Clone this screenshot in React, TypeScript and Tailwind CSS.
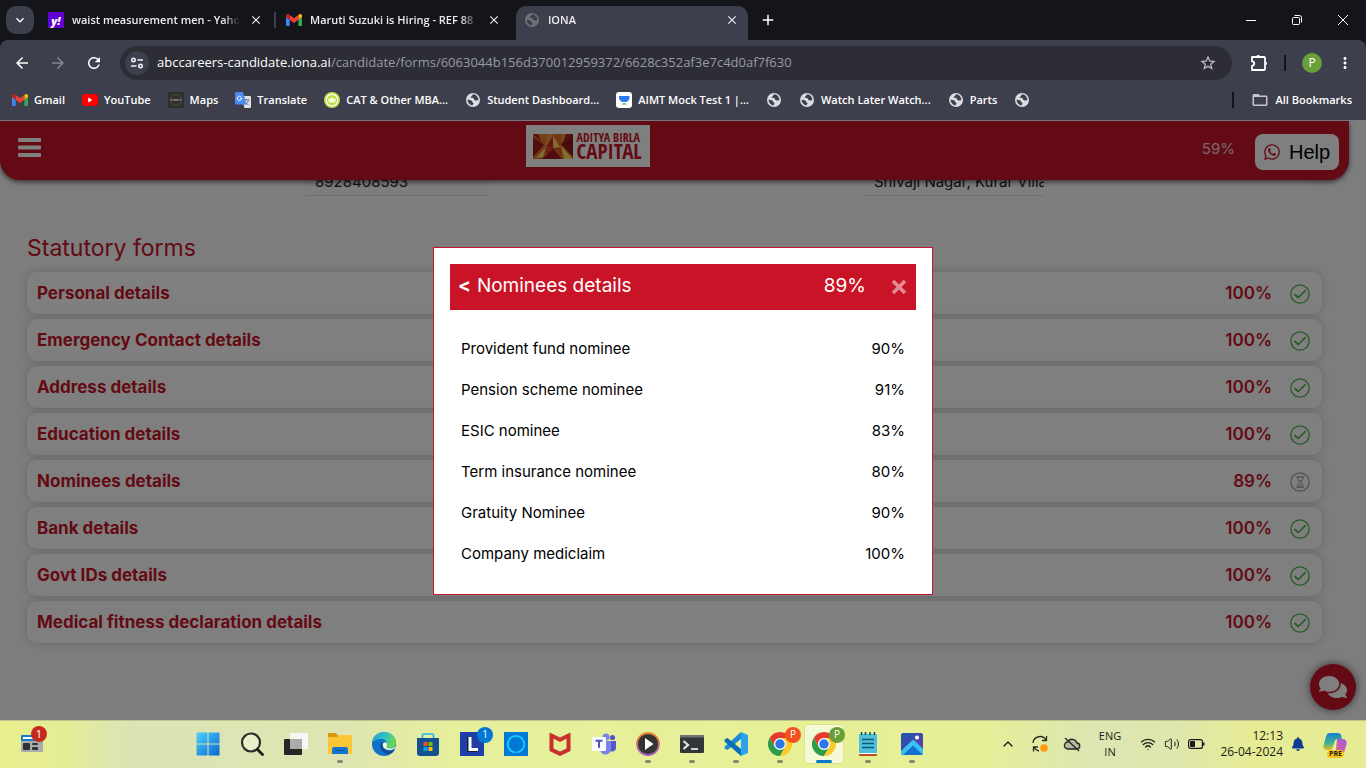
import type { ReactNode } from "react";
import {
  MdArrowBack,
  MdArrowForward,
  MdRefresh,
  MdStarBorder,
  MdMoreVert,
  MdFolderOpen,
  MdClose,
  MdAdd,
  MdKeyboardArrowDown,
} from "react-icons/md";
import { FaComments, FaWhatsapp, FaBell } from "react-icons/fa";
import { ChevronUp, Wifi, Volume2 } from "lucide-react";

/* ---------- small drawings ---------- */

function GmailIcon() {
  return (
    <svg viewBox="52 42 88 66" className="h-3 w-4 shrink-0">
      <path fill="#4285f4" d="M58 108h14V74L52 59v43c0 3.32 2.69 6 6 6" />
      <path fill="#34a853" d="M120 108h14c3.32 0 6-2.69 6-6V59l-20 15" />
      <path fill="#fbbc04" d="M120 48v26l20-15v-8c0-7.42-8.47-11.65-14.4-7.2" />
      <path fill="#ea4335" d="M72 74V48l24 18 24-18v26L96 92" />
      <path fill="#c5221f" d="M52 51v8l20 15V48l-5.6-4.2c-5.94-4.45-14.4-.22-14.4 7.2" />
    </svg>
  );
}

function YahooIcon() {
  return (
    <span className="flex size-4 shrink-0 items-center justify-center bg-[#6001d2] text-[11px] leading-none font-extrabold text-white italic">
      y!
    </span>
  );
}

function YouTubeIcon() {
  return (
    <svg viewBox="0 0 16 12" className="h-3 w-4 shrink-0">
      <rect width="16" height="12" rx="3" fill="#f00" />
      <path d="M6.2 3.6v4.8l4.2-2.4z" fill="#fff" />
    </svg>
  );
}

function MapsIcon() {
  return (
    <svg viewBox="0 0 16 16" className="size-4 shrink-0">
      <rect width="16" height="16" fill="#302d2d" />
      <circle cx="8" cy="8" r="5.5" fill="none" stroke="#55504e" />
      <path d="M2 8h3l1-1 1 2 1-2 1 2 1-2 1 1h3" fill="none" stroke="#8d8580" />
    </svg>
  );
}

function TranslateIcon() {
  return (
    <svg viewBox="0 0 16 16" className="size-4 shrink-0">
      <path d="M6 4h9a1 1 0 0 1 1 1v10a1 1 0 0 1-1 1H9.500z" fill="#dfe1e5" />
      <path d="M8.500 8h6M11.500 6.800v1.200M13.500 8c-.6 2-2 3.500-3.500 4.500M9.800 9.500c.8 1.500 2 2.500 3.700 3.200" stroke="#5f6f86" strokeWidth=".9" fill="none" />
      <path d="M1 0h7l3.600 12.500H1a1 1 0 0 1-1-1V1a1 1 0 0 1 1-1z" fill="#4a8af4" />
      <path d="M6.300 5.100A2.200 2.200 0 1 0 6.700 6.500H4.700" fill="none" stroke="#fff" strokeWidth="1" />
    </svg>
  );
}

function CatIcon() {
  return (
    <svg viewBox="0 0 16 16" className="size-4 shrink-0">
      <circle cx="8" cy="8" r="8" fill="#bfe04a" />
      <circle cx="8" cy="8" r="5.800" fill="none" stroke="#fff" strokeWidth="1.200" />
      <path d="M4 7.500 8 5.500l4 2-1 3H5z" fill="#f4fbd8" />
    </svg>
  );
}

function AimtIcon() {
  return (
    <svg viewBox="0 0 16 16" className="size-4 shrink-0">
      <rect width="16" height="16" rx="3" fill="#fff" />
      <path d="M3 4h10.500v1.500A4.500 4.500 0 0 1 9 10H7.500A4.500 4.500 0 0 1 3 5.500z" fill="#2b7bf0" />
      <path d="M5.500 12.500a3 2 0 0 1 5.500 0z" fill="#1cb57a" />
    </svg>
  );
}

function Globe({ dim = false }: { dim?: boolean }) {
  return (
    <svg viewBox="0 0 16 16" className={dim ? "size-4 shrink-0 text-[#6f7177]" : "size-4 shrink-0 text-[#dcdde0]"}>
      <circle cx="8" cy="8" r="7" fill="currentColor" />
      <path
        d="M8.300 2.300c-.9.300-1.300 1-1 1.700-.9.200-1.600.700-1.700 1.500.9.600 2.200.300 3 .900.700.600.500 1.500 1.300 1.900 1 .400 1.900-.300 3.400-.1a5.500 5.500 0 0 0-5-5.900zM2.600 7.800c1.300-.100 2.700 0 3.700.600.900.600.600 1.500 1.400 2 .500.300.900.500.800 1.100-.100.700-.900.800-.900 1.900-2.800-.200-5-2.600-5-5.600z"
        fill="#3e3f4c"
      />
    </svg>
  );
}

function PuzzleIcon() {
  return (
    <svg viewBox="0 0 18 18" className="size-[18px]" fill="none" stroke="#fff" strokeWidth="1.800" strokeLinejoin="round">
      <path d="M2 3h12a1 1 0 0 1 1 1v11a1 1 0 0 1-1 1H2v-4.200a2.200 2.200 0 0 0 0-4.400z" />
      <path d="M6.300 2.500a1.900 1.900 0 0 1 3.700 0zM15.500 7.600a1.900 1.900 0 0 1 0 3.700z" fill="#fff" stroke="none" />
    </svg>
  );
}

function SiteInfoIcon() {
  return (
    <svg viewBox="0 0 14 12" className="h-3 w-3.5" fill="none" stroke="#f0f0f3" strokeWidth="1.600">
      <circle cx="3.500" cy="3" r="1.700" />
      <path d="M7.500 3H13M1 9h5.500" />
      <circle cx="10.500" cy="9" r="1.700" />
    </svg>
  );
}

function CheckIcon() {
  return (
    <svg viewBox="0 0 20 20" className="size-5" fill="none" stroke="#53b653" strokeLinecap="round" strokeLinejoin="round">
      <circle cx="10" cy="10" r="9.200" strokeWidth="1.300" />
      <path d="M5 10.500 8.300 13.500 15.200 6.600" strokeWidth="1.700" />
    </svg>
  );
}

function PendingIcon() {
  return (
    <svg viewBox="0 0 20 20" className="size-5" fill="none" stroke="#a3a3a3">
      <circle cx="10" cy="10" r="9.200" strokeWidth="1.300" />
      <path d="M6.500 5h7.500M6.500 15.300h7.500" strokeWidth="1.300" />
      <path d="M7.500 5.500c0 2.700 1.200 3.500 2.200 4.600-1 1.100-2.200 2-2.200 4.700M13 5.500c0 2.700-1.200 3.500-2.200 4.600 1 1.100 2.200 2 2.200 4.700" />
      <path d="M8.300 14.500 10.250 12l1.950 2.500zM8.700 8h3.100l-1.550 1.700z" fill="#a3a3a3" stroke="none" />
    </svg>
  );
}

function MosaicLogo() {
  return (
    <svg viewBox="0 0 40 25" className="h-[25px] w-10 shrink-0">
      <rect width="40" height="25" fill="#e8702c" />
      <path d="M0 0h6l3 9z" fill="#b3261e" />
      <path d="M0 3v20l11-12z" fill="#a01c1a" />
      <path d="M5 0h8L9 9z" fill="#e8832f" />
      <path d="M13 0h7v12L12 14z" fill="#f09a38" />
      <path d="M13 13 20 2v12z" fill="#d3262d" />
      <path d="M20 2v12l7-1z" fill="#f5dc5a" />
      <path d="M20 0h8l-2 11z" fill="#e5702c" />
      <path d="M28 0h6l-5 9z" fill="#f0903a" />
      <path d="M40 2v21L28 10z" fill="#8d1618" />
      <path d="M33 0h7v3l-10 6z" fill="#a21c1e" />
      <path d="M3 24 13 13l-3 10z" fill="#f6e262" />
      <path d="M9 25l11-11 9 11z" fill="#a01a1c" />
      <path d="M12 14h8l-7 8z" fill="#d8442a" />
      <path d="M20 14h8l2 8z" fill="#e0522c" />
      <path d="M28 12l12 13h-9z" fill="#f6e262" />
    </svg>
  );
}

function ChromeIcon() {
  return (
    <svg viewBox="0 0 48 48" className="size-6">
      <circle cx="24" cy="24" r="12" fill="#fff" />
      <path fill="#e33b2e" d="M24 12h20.780a23.994 23.994 0 0 0-41.564.003L13.608 30A11.985 11.985 0 0 1 24 12z" />
      <path fill="#2a9c4a" d="M13.609 30.003 3.218 12.006A23.994 23.994 0 0 0 24.003 48l10.390-17.997a11.985 11.985 0 0 1-20.784 0z" />
      <path fill="#fcc92e" d="M34.391 30.003 24 48a23.994 23.994 0 0 0 20.780-35.998H24a11.985 11.985 0 0 1 10.391 18z" />
      <circle cx="24" cy="24" r="9.500" fill="#2b76e8" />
    </svg>
  );
}

function WidgetsIcon() {
  return (
    <svg viewBox="0 0 22 17" className="h-[17px] w-[22px]">
      <rect width="22" height="17" rx="1" fill="#a9abad" />
      <rect width="22" height="6" rx="1" fill="#1380c4" />
      <rect x="2" y="2" width="11" height="2" fill="#fff" />
      <rect x="2" y="8" width="7" height="7" rx="1" fill="#303234" />
      <rect x="11" y="8" width="6" height="2" rx="1" fill="#303234" />
      <rect x="11" y="12" width="6" height="3" rx="1" fill="#303234" />
    </svg>
  );
}

function StartIcon() {
  return (
    <svg viewBox="0 0 24 24" className="size-6">
      <defs>
        <linearGradient id="start" x1="0" y1="0" x2="1" y2="1">
          <stop offset="0" stopColor="#50d0fb" />
          <stop offset="1" stopColor="#0668cf" />
        </linearGradient>
      </defs>
      <path d="M1 .5h10.500v11H.500V1zM12.500.5h11v11h-11zM.500 12.500h11v11H.500zM12.500 12.500h11v11h-11z" fill="url(#start)" />
    </svg>
  );
}

function SearchIcon() {
  return (
    <svg viewBox="0 0 24 24" className="size-6">
      <circle cx="11" cy="10.500" r="9" fill="#f3f5dc" fillOpacity=".6" stroke="#2c2c2c" strokeWidth="2.200" />
      <path d="m17.500 17.500 5 5" stroke="#1c1c1c" strokeWidth="2.800" strokeLinecap="round" />
    </svg>
  );
}

function TaskViewIcon() {
  return (
    <svg viewBox="0 0 24 24" className="size-6">
      <rect x="0" y="7" width="18" height="16" rx="1" fill="#262626" />
      <rect x="6" y="1" width="18" height="16" rx="1" fill="#f7f7f7" />
      <rect x="6" y="7" width="12" height="10" fill="#ababab" />
    </svg>
  );
}

function ExplorerIcon() {
  return (
    <svg viewBox="0 0 24 24" className="size-6">
      <path d="M0 2a1 1 0 0 1 1-1h7l2 2.500v4H0z" fill="#d99a06" />
      <path d="M0 5h9l2-2h12a1 1 0 0 1 1 1v18H0z" fill="#fdc636" />
      <path d="M4 22v-5a2 2 0 0 1 2-2h12a2 2 0 0 1 2 2v5z" fill="#1276cc" />
      <path d="M7 18.500h10" stroke="#0b559c" />
    </svg>
  );
}

function EdgeIcon() {
  return (
    <svg viewBox="0 0 24 24" className="size-6">
      <defs>
        <linearGradient id="edgeTop" x1="0" y1="0" x2="1" y2=".4">
          <stop offset="0" stopColor="#1d9fdc" />
          <stop offset=".6" stopColor="#35c5c0" />
          <stop offset="1" stopColor="#66d84d" />
        </linearGradient>
      </defs>
      <circle cx="12" cy="12" r="12" fill="#1170c8" />
      <path d="M0 11C1 4 6 0 12 0c7 0 12 5 12 10 0 4-3 6.500-6.500 6.500-2.500 0-4-1-3.500-2 1-1 1-2 1-3C15 9 12.500 7 9 7 5 7 1.500 8.500 0 11z" fill="url(#edgeTop)" />
      <path d="M8.500 12c-1 5 3 10 8 10 2 0 4.500-1.500 6-4-6 3-12.500 0-12-5 0-1.500 1-2.500 1.500-3-2 0-3.200 1-3.500 2z" fill="#0f4a93" />
      <path d="M11.200 11c-1.500 3 1 7 6 7 2 0 4-.6 5.500-1.500l1.200-3c-1.500 2-3.500 3-6 3-2.500 0-4-1-3.500-2 1-1 .800-2.500.300-3.500-.800-1.200-2.600-1-3.500 0z" fill="#eef7df" />
    </svg>
  );
}

function StoreIcon() {
  return (
    <svg viewBox="0 0 24 24" className="size-6">
      <path d="M6.500 7V3a1 1 0 0 1 1-1h9a1 1 0 0 1 1 1v4" fill="none" stroke="#25b5ea" strokeWidth="1.700" />
      <path d="M1 6h22v15a3 3 0 0 1-3 3H4a3 3 0 0 1-3-3z" fill="#15508f" />
      <path d="M7.500 10h4v4h-4z" fill="#f25022" />
      <path d="M12.500 10h4v4h-4z" fill="#7fba00" />
      <path d="M7.500 15h4v4h-4z" fill="#00a4ef" />
      <path d="M12.500 15h4v4h-4z" fill="#ffb900" />
    </svg>
  );
}

function LIcon() {
  return (
    <svg viewBox="0 0 24 24" className="size-6">
      <rect width="24" height="24" fill="#1f3ea8" />
      <path d="M8.500 5v13.500H17" fill="none" stroke="#14202e" strokeWidth="3" />
      <path d="M10 5v12.500h8" fill="none" stroke="#fff" strokeWidth="3" />
    </svg>
  );
}

function AlexaIcon() {
  return (
    <svg viewBox="0 0 24 24" className="size-6">
      <rect width="24" height="24" fill="#0078d7" />
      <path d="M10.500 20.300a8.200 8.200 0 1 1 3 0" fill="none" stroke="#16c8f8" strokeWidth="1.900" />
      <path d="M10.500 21.200v-2l3 1.200z" fill="#16c8f8" />
    </svg>
  );
}

function McAfeeIcon() {
  return (
    <svg viewBox="0 0 24 24" className="size-6">
      <path d="M1.500.5 12 5.500 22.500.5V19L12 24 1.500 19z" fill="#c7302b" />
      <path d="M5.500 6.500 12 10l6.500-3.500v10L12 19.500l-6.500-3z" fill="#e6ef9a" />
    </svg>
  );
}

function TeamsIcon() {
  return (
    <svg viewBox="0 0 24 24" className="size-6">
      <circle cx="20.500" cy="5.500" r="2.600" fill="#5059c9" />
      <circle cx="14" cy="5" r="3.600" fill="#7b83eb" />
      <path d="M17 9h7v7.500a4 4 0 0 1-6 2.500z" fill="#5059c9" />
      <path d="M8 9h11v8a5.500 5.500 0 0 1-11 0z" fill="#7b83eb" />
      <rect y="5" width="14" height="14" rx="1" fill="#fbfbff" />
      <path d="M3.500 8.800h7M7 8.800v7" stroke="#4b53bc" strokeWidth="2" />
    </svg>
  );
}

function PlayerIcon() {
  return (
    <svg viewBox="0 0 24 24" className="size-6">
      <defs>
        <linearGradient id="ring" x1="0" y1="0" x2="0" y2="1">
          <stop offset="0" stopColor="#f08a2c" />
          <stop offset="1" stopColor="#a05ac8" />
        </linearGradient>
      </defs>
      <circle cx="12" cy="12" r="11" fill="#333" stroke="url(#ring)" strokeWidth="1.800" />
      <path d="m9 6 8.500 6L9 18z" fill="#fff" />
    </svg>
  );
}

function TerminalIcon() {
  return (
    <svg viewBox="0 0 24 24" className="size-6">
      <rect y="3" width="24" height="18" rx="1" fill="#333638" />
      <rect y="3" width="24" height="2.500" fill="#6f7274" />
      <path d="m3.500 9 4.500 4-4.500 4" fill="none" stroke="#e2e2e2" strokeWidth="2.200" />
      <path d="M11 17h7" stroke="#e2e2e2" strokeWidth="1.800" />
    </svg>
  );
}

function CodeIcon() {
  return (
    <svg viewBox="0 0 24 24" className="size-6">
      <path d="M17 0v7L3.500 18 .5 16.500v-1.800z" fill="#1c8ad4" />
      <path d="M3.500 6 .5 7.600v1.800L17 24v-7z" fill="#0a6fb8" />
      <path d="m17 0 7 3v18l-7 3z" fill="#2ba3ee" />
    </svg>
  );
}

function NotepadIcon() {
  return (
    <svg viewBox="0 0 24 24" className="size-6">
      <rect x="3" y="2" width="18" height="20" rx="1" fill="#4fc0dc" />
      <path d="M3 21h18v1H3z" fill="#fff" />
      <path d="M3 23h18" stroke="#b8501c" strokeWidth="2" />
      <path d="M6 7.500h12M6 11.500h12M6 15.500h12" stroke="#0b5a72" strokeWidth="1.600" />
      <path d="M5.500 0v3M9.500 0v3M14 0v3M18.500 0v3" stroke="#12485a" strokeWidth="1.500" />
    </svg>
  );
}

function PhotosIcon() {
  return (
    <svg viewBox="0 0 24 24" className="size-6">
      <defs>
        <linearGradient id="photo" x1="0" y1="0" x2="1" y2="1">
          <stop offset="0" stopColor="#1a55b0" />
          <stop offset="1" stopColor="#6b3fa8" />
        </linearGradient>
      </defs>
      <rect x="1" y="1" width="22" height="22" rx="2" fill="url(#photo)" />
      <path d="M1 19 12 8.500a2 2 0 0 1 2.500 0L23 17v4a2 2 0 0 1-2 2H3a2 2 0 0 1-2-2z" fill="#37c3f4" />
      <path d="m3 23 10-9.500 9.500 9a3 3 0 0 1-1.500.500z" fill="#1273cf" />
      <circle cx="17" cy="5.500" r="2" fill="#fff" />
    </svg>
  );
}

function CopilotIcon() {
  return (
    <svg viewBox="0 0 24 24" className="size-6">
      <defs>
        <linearGradient id="cpA" x1="0" y1="0" x2="0" y2="1">
          <stop offset="0" stopColor="#1480d8" />
          <stop offset=".6" stopColor="#3fb58c" />
          <stop offset="1" stopColor="#f2b81f" />
        </linearGradient>
        <linearGradient id="cpB" x1="1" y1="0" x2="0" y2="1">
          <stop offset="0" stopColor="#9a5be6" />
          <stop offset="1" stopColor="#f4607c" />
        </linearGradient>
      </defs>
      <path d="M14 7h5a4 4 0 0 1 4.500 5l-1.600 6a5 5 0 0 1-5 4H9c3 0 3.500-2 4-4z" fill="url(#cpB)" />
      <path d="M7 1h8c3 0 3.500 3 4 6h-4c-2 0-3 1-3.600 3L9.500 16c-.5 1.500-1.500 2-3 2H4c-3 0-4-2-3.300-5L3 4.500C3.800 2 5 1 7 1z" fill="url(#cpA)" />
    </svg>
  );
}

function SyncIcon() {
  return (
    <svg viewBox="0 0 18 18" className="size-[18px]" fill="none" stroke="#2b2b22" strokeWidth="1.300">
      <path d="M2 8a7 7 0 0 1 13-3M15.500 1v4.500H11M8 16a7 7 0 0 1-5-3.500M2.500 16.500v-4.500H7" />
      <circle cx="13" cy="13" r="3.800" fill="#ff9a0a" stroke="none" />
    </svg>
  );
}

function CloudOffIcon() {
  return (
    <svg viewBox="0 0 18 16" className="h-4 w-[18px]" fill="none" stroke="#26261e" strokeWidth="1.300">
      <path d="M5 13a3.500 3.500 0 0 1-.3-7 5 5 0 0 1 9.300 1 3 3 0 0 1-.5 6z" fill="#b5b7a0" />
      <path d="m2 2 14 13" />
    </svg>
  );
}

function BatteryIcon() {
  return (
    <svg viewBox="0 0 17 10" className="h-2.5 w-[17px]">
      <rect x=".6" y=".6" width="13.800" height="8.800" rx="2" fill="none" stroke="#1c1c16" strokeWidth="1.200" />
      <rect x="2" y="2" width="5" height="6" rx="1" fill="#1c1c16" />
      <path d="M15.800 3.500v3" stroke="#1c1c16" strokeWidth="1.400" />
    </svg>
  );
}

/* ---------- browser ---------- */

function Tab({ icon, title, active = false }: { icon: ReactNode; title: string; active?: boolean }) {
  return (
    <div
      className={
        active
          ? "flex h-[34px] w-[232px] items-center gap-2 rounded-t-[10px] bg-[#3e3f4c] pr-2 pb-1.5 pl-2"
          : "flex h-[34px] w-[232px] items-center gap-2 pr-2 pb-1.5 pl-2"
      }
    >
      {icon}
      <span className="w-[168px] mask-r-from-90% text-[11px] font-semibold whitespace-nowrap text-[#ececf0]">
        {title}
      </span>
      <button aria-label={`Close ${title}`} className="flex size-4 shrink-0 items-center justify-center text-[#ececf0]">
        <MdClose className="size-3.5" />
      </button>
    </div>
  );
}

function TabStrip() {
  return (
    <div className="flex h-10 items-start bg-[#14151a] pt-1.5 pl-1.5">
      <button aria-label="Search tabs" className="mr-1.5 flex size-7 items-center justify-center rounded-[10px] bg-[#3e3f4c] text-white">
        <MdKeyboardArrowDown className="size-4" />
      </button>
      <Tab icon={<YahooIcon />} title="waist measurement men - Yaho" />
      <span className="mx-0.5 mt-1.5 h-4 w-0.5 bg-[#3e3f4c]" />
      <Tab icon={<GmailIcon />} title="Maruti Suzuki is Hiring - REF 88" />
      <span className="w-1.5" />
      <Tab icon={<Globe dim />} title="IONA" active />
      <button aria-label="New tab" className="ml-1.5 flex size-7 items-center justify-center text-white">
        <MdAdd className="size-[18px]" />
      </button>
      <div className="ml-auto flex">
        <button aria-label="Minimize" className="flex h-7 w-[46px] items-center justify-center">
          <svg viewBox="0 0 10 10" className="size-2.5"><path d="M0 5.500h10" stroke="#fff" /></svg>
        </button>
        <button aria-label="Restore" className="flex h-7 w-[46px] items-center justify-center">
          <svg viewBox="0 0 10 10" className="size-2.5 overflow-visible" fill="none" stroke="#fff">
            <rect x=".5" y="2.500" width="7" height="7" rx="1" />
            <path d="M2.500.5h5a2 2 0 0 1 2 2v5" />
          </svg>
        </button>
        <button aria-label="Close window" className="flex h-7 w-[46px] items-center justify-center">
          <svg viewBox="0 0 10 10" className="size-2.5"><path d="m0 0 10 10M10 0 0 10" stroke="#fff" /></svg>
        </button>
      </div>
    </div>
  );
}

function AddressBar() {
  return (
    <div className="flex h-[46px] items-center pl-1">
      <button aria-label="Back" className="flex w-9 justify-center text-white"><MdArrowBack className="size-[18px]" /></button>
      <button aria-label="Forward" className="flex w-9 justify-center text-[#85868e]"><MdArrowForward className="size-[18px]" /></button>
      <button aria-label="Reload" className="flex w-9 justify-center text-white"><MdRefresh className="size-[18px]" /></button>
      <div className="ml-2 flex h-[34px] flex-1 items-center rounded-full bg-[#2c2d35] pr-[15px] pl-[5px]">
        <button aria-label="Site information" className="flex size-6 items-center justify-center rounded-full bg-[#3e3f4c]">
          <SiteInfoIcon />
        </button>
        <a href="#url" className="ml-2 flex-1 text-[13px] whitespace-nowrap text-[#9a9ba1]">
          <span className="text-white">abccareers-candidate.iona.ai</span>/candidate/forms/6063044b156d370012959372/6628c352af3e7c4d0af7f630
        </a>
        <button aria-label="Bookmark this page" className="text-[#c4c5ca]"><MdStarBorder className="size-[18px]" /></button>
      </div>
      <button aria-label="Extensions" className="ml-[18px]"><PuzzleIcon /></button>
      <span className="ml-4 h-4 w-0.5 bg-[#14151a]" />
      <button aria-label="Profile" className="ml-4 flex size-5 items-center justify-center rounded-full bg-[#689f38] text-xs text-white">P</button>
      <button aria-label="Menu" className="mr-3 ml-3.5 text-white"><MdMoreVert className="size-[18px]" /></button>
    </div>
  );
}

const bookmarks: { icon: ReactNode; label: string; name: string }[] = [
  { icon: <GmailIcon />, label: "Gmail", name: "gmail" },
  { icon: <YouTubeIcon />, label: "YouTube", name: "youtube" },
  { icon: <MapsIcon />, label: "Maps", name: "maps" },
  { icon: <TranslateIcon />, label: "Translate", name: "translate" },
  { icon: <CatIcon />, label: "CAT & Other MBA...", name: "cat" },
  { icon: <Globe />, label: "Student Dashboard...", name: "student" },
  { icon: <AimtIcon />, label: "AIMT Mock Test 1 |...", name: "aimt" },
  { icon: <Globe />, label: "", name: "site-one" },
  { icon: <Globe />, label: "Watch Later Watch...", name: "watch" },
  { icon: <Globe />, label: "Parts", name: "parts" },
  { icon: <Globe />, label: "", name: "site-two" },
];

function BookmarksBar() {
  return (
    <nav className="flex h-7 items-center gap-[17px] pr-[14px] pl-3 text-[11px] font-semibold whitespace-nowrap text-white">
      {bookmarks.map((b) => (
        <a key={b.name} href={`#${b.name}`} aria-label={b.label || b.name} className="flex items-center gap-1.5">
          {b.icon}
          {b.label && <span>{b.label}</span>}
        </a>
      ))}
      <span className="ml-auto h-4 w-0.5 bg-[#14151a]" />
      <a href="#all" className="flex items-center gap-1.5">
        <MdFolderOpen className="size-[18px] text-[#c4c5ca]" />
        All Bookmarks
      </a>
    </nav>
  );
}

/* ---------- portal page ---------- */

const forms = [
  { name: "Personal details", value: 100 },
  { name: "Emergency Contact details", value: 100 },
  { name: "Address details", value: 100 },
  { name: "Education details", value: 100 },
  { name: "Nominees details", value: 89 },
  { name: "Bank details", value: 100 },
  { name: "Govt IDs details", value: 100 },
  { name: "Medical fitness declaration details", value: 100 },
];

const nominees = [
  { name: "Provident fund nominee", value: 90 },
  { name: "Pension scheme nominee", value: 91 },
  { name: "ESIC nominee", value: 83 },
  { name: "Term insurance nominee", value: 80 },
  { name: "Gratuity Nominee", value: 90 },
  { name: "Company mediclaim", value: 100 },
];

function PortalHeader() {
  return (
    <header className="relative z-10 mr-[17px] grid h-[59px] grid-cols-[1fr_auto_1fr] items-start rounded-b-[20px] bg-[#c81428] pr-2.5 pl-[18px] shadow-[0_2px_5px_rgba(0,0,0,0.6)]">
      <button aria-label="Open menu" className="mt-[17px] w-[23px]">
        <svg viewBox="0 0 23 19" className="h-[19px] w-[23px]" fill="#fff">
          <rect width="23" height="4" rx="1" />
          <rect y="7.500" width="23" height="4" rx="1" />
          <rect y="15" width="23" height="4" rx="1" />
        </svg>
      </button>
      <div className="mt-1 mr-[182px] flex h-[42px] w-[124px] items-center gap-1 bg-white pl-[7px] text-[#c81428]">
        <MosaicLogo />
        <div className="font-['Open_Sans_Condensed','Open_Sans',sans-serif] font-bold font-stretch-condensed whitespace-nowrap">
          <div className="text-xs leading-[10px]">ADITYA BIRLA</div>
          <div className="text-[21px] leading-4">CAPITAL</div>
        </div>
      </div>
      <div className="flex items-start justify-end gap-5">
        <span className="mt-[18px] text-[15px] leading-5 text-white/80">59%</span>
        <button className="mt-[13px] flex h-9 w-[84px] items-center gap-2 rounded-lg bg-white pl-2 font-['Liberation_Sans',sans-serif] text-xl text-black">
          <FaWhatsapp className="size-[18px] text-[#c81428]" />
          Help
        </button>
      </div>
    </header>
  );
}

function StatutoryForms() {
  return (
    <section className="mx-[27px] mr-11 mt-[22px] text-[#c81428]">
      <h1 className="text-[23px] leading-8">Statutory forms</h1>
      <ul className="mt-2 flex flex-col gap-[5px]">
        {forms.map((f) => (
          <li key={f.name}>
            <button className="flex h-[42px] w-full items-center rounded-[10px] bg-white pt-0.5 pr-3 pl-2.5 text-left text-[17px] font-bold shadow-[0_0_10px_rgba(0,0,0,0.18)]">
              <span className="flex-1">{f.name}</span>
              <span className="mr-[18px] font-semibold">{f.value}%</span>
              <span>{f.value === 100 ? <CheckIcon /> : <PendingIcon />}</span>
            </button>
          </li>
        ))}
      </ul>
    </section>
  );
}

function NomineesDialog() {
  return (
    <div role="dialog" aria-label="Nominees details" className="w-[500px] border border-[#c81428] bg-white px-4 pt-4 pb-[19px] text-black">
      <div className="flex h-[46px] items-center bg-[#c91428] px-2 text-[19px] text-white">
        <button className="flex items-center gap-1.5">
          <b>&lt;</b>
          <span>Nominees details</span>
        </button>
        <span className="mr-6 ml-auto">89%</span>
        <button aria-label="Close" className="text-white/50">
          <svg viewBox="0 0 18 18" className="size-[18px]">
            <path d="m3 3 12 12M15 3 3 15" stroke="currentColor" strokeWidth="3.600" />
          </svg>
        </button>
      </div>
      <ul className="mt-[19px] px-[11px] text-[15px]">
        {nominees.map((n) => (
          <li key={n.name} className="flex h-[41px] items-center justify-between">
            <a href="#nominee">{n.name}</a>
            <span>{n.value}%</span>
          </li>
        ))}
      </ul>
    </div>
  );
}

function Portal() {
  return (
    <main className="relative flex-1 overflow-hidden bg-[#fafafa] font-[Inter,sans-serif]">
      <PortalHeader />
      <div className="mr-14 -mt-3 ml-[120px] grid h-[42px] grid-cols-[556px_1fr] bg-[#fdfdfd] pl-[185px] text-[15px] text-[#222]">
        <input aria-label="Mobile number" readOnly defaultValue="8928408593" className="h-7 w-[184px] border-b border-[#e4e4e4] bg-[#fafafa] px-2.5" />
        <input aria-label="Address" readOnly defaultValue="Shivaji Nagar, Kurar Village" className="h-7 w-[183px] border-b border-[#e4e4e4] pl-[13px]" />
      </div>
      <StatutoryForms />
      <button aria-label="Chat" className="absolute right-2.5 bottom-2.5 flex size-[46px] items-center justify-center rounded-full bg-[#c81428] text-white shadow-[0_0_8px_rgba(0,0,0,0.6)]">
        <FaComments className="size-7" />
      </button>
      <div className="absolute inset-0 z-20 flex items-center justify-center bg-black/50">
        <NomineesDialog />
      </div>
    </main>
  );
}

/* ---------- taskbar ---------- */

type App = { name: string; icon: ReactNode; running?: boolean; active?: boolean; badge?: string; badgeColor?: string };

const apps: App[] = [
  { name: "Start", icon: <StartIcon /> },
  { name: "Search", icon: <SearchIcon /> },
  { name: "Task view", icon: <TaskViewIcon /> },
  { name: "File Explorer", icon: <ExplorerIcon />, running: true },
  { name: "Edge", icon: <EdgeIcon /> },
  { name: "Store", icon: <StoreIcon /> },
  { name: "Vantage", icon: <LIcon />, badge: "1", badgeColor: "bg-[#0078d4]" },
  { name: "Alexa", icon: <AlexaIcon /> },
  { name: "McAfee", icon: <McAfeeIcon /> },
  { name: "Teams", icon: <TeamsIcon /> },
  { name: "Media Player", icon: <PlayerIcon />, running: true },
  { name: "Terminal", icon: <TerminalIcon />, running: true },
  { name: "Code", icon: <CodeIcon />, running: true },
  { name: "Chrome, first profile", icon: <ChromeIcon />, running: true, badge: "P", badgeColor: "bg-[#f4511e]" },
  { name: "Chrome, second profile", icon: <ChromeIcon />, active: true, badge: "P", badgeColor: "bg-[#689f38]" },
  { name: "Notepad", icon: <NotepadIcon />, running: true },
  { name: "Photos", icon: <PhotosIcon />, running: true },
];

function TaskbarApp({ app }: { app: App }) {
  return (
    <button
      aria-label={app.name}
      className={
        app.active
          ? "relative mx-[3px] flex h-[38px] w-[38px] items-center justify-center rounded bg-[#f4f9d6] ring-1 ring-black/5"
          : "relative mx-[3px] flex h-[38px] w-[38px] items-center justify-center rounded"
      }
    >
      {app.icon}
      {app.badge && (
        <span className={`absolute top-[2px] -right-[2px] flex size-4 items-center justify-center rounded-full text-[10px] text-white ${app.badgeColor}`}>
          {app.badge}
        </span>
      )}
      {app.running && <span className="absolute bottom-0 h-[3px] w-1.5 rounded-full bg-[#87896a]" />}
      {app.active && <span className="absolute bottom-0 h-[3px] w-4 rounded-full bg-[#0b78c8]" />}
    </button>
  );
}

function Taskbar() {
  return (
    <footer className="flex h-12 items-center border-t border-[#bfc58f] bg-[linear-gradient(to_right,#e9f08c_0%,#e4ec98_5%,#dce4b4_9%,#dee5b2_25%,#e6ef9c_33%,#e8f096_60%,#e6ee98_72%,#dde5b2_80%,#dfe6ae_86%,#e6ec92_92%,#e6ec96_100%)] pb-0.5 text-xs text-[#1c1c16]">
      <div className="w-[186px] pl-[21px]">
        <button aria-label="Widgets" className="relative block">
          <WidgetsIcon />
          <span className="absolute -top-[9px] left-2.5 flex size-4 items-center justify-center rounded-full bg-[#c42b1c] text-[11px] text-white">1</span>
        </button>
      </div>
      {apps.map((a) => (
        <TaskbarApp key={a.name} app={a} />
      ))}
      <div className="ml-auto flex items-center pr-[19px]">
        <button aria-label="Show hidden icons" className="flex w-8 justify-center"><ChevronUp className="size-4" /></button>
        <button aria-label="Updates" className="flex w-8 justify-center"><SyncIcon /></button>
        <button aria-label="Cloud storage" className="flex w-8 justify-center"><CloudOffIcon /></button>
        <button className="mr-1 w-11 text-center text-[11px] leading-4">ENG<br />IN</button>
        <button aria-label="Network, sound and battery" className="flex items-center">
          <span className="flex w-6 justify-center"><Wifi className="size-4" /></span>
          <span className="flex w-6 justify-center"><Volume2 className="size-4" strokeWidth={1.5} /></span>
          <span className="flex w-6 justify-center"><BatteryIcon /></span>
        </button>
        <button className="w-[75px] text-right text-xs leading-4 whitespace-nowrap">12:13<br />26-04-2024</button>
        <button aria-label="Notifications" className="ml-2 text-[#0a3d8f]"><FaBell className="size-[14px]" /></button>
        <button aria-label="Copilot" className="relative ml-[18px]">
          <CopilotIcon />
          <span className="absolute -bottom-0.5 left-1 rounded-sm bg-[#fcc419] px-0.5 text-[7px] leading-2 font-bold">PRE</span>
        </button>
      </div>
    </footer>
  );
}

export default function App() {
  return (
    <div className="flex min-h-screen flex-col bg-[#14151a] font-['Open_Sans',sans-serif]">
      <TabStrip />
      <div className="rounded-t-lg border-b border-[#75767e] bg-[#3e3f4c] pb-1.5">
        <AddressBar />
        <BookmarksBar />
      </div>
      <Portal />
      <Taskbar />
    </div>
  );
}
